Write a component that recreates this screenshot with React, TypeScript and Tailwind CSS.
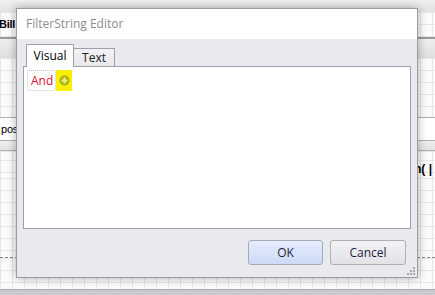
import React from "react";

const grid =
  "bg-[#fbfbfb] bg-[linear-gradient(to_right,#e6e6e6_1px,transparent_1px),linear-gradient(to_bottom,#e6e6e6_1px,transparent_1px)] bg-[size:12px_12px]";

function PlusIcon() {
  return (
    <svg width="11" height="11" viewBox="0 0 11 11">
      <circle cx="5.5" cy="5.5" r="5" fill="#a3a31e" />
      <circle cx="5.5" cy="5.5" r="4" fill="#b5b52a" />
      <path d="M5.5 2.5v6M2.5 5.5h6" stroke="#f0f07a" strokeWidth="1.8" />
    </svg>
  );
}

function Grip() {
  const dots = [
    [6, 0],
    [6, 3],
    [3, 3],
    [6, 6],
    [3, 6],
    [0, 6],
  ];
  return (
    <svg width="8" height="8" viewBox="0 0 8 8">
      {dots.map(([x, y], i) => (
        <rect key={i} x={x} y={y} width="2" height="2" fill="#a8a8b0" />
      ))}
    </svg>
  );
}

export default function App() {
  return (
    <div
      className="relative w-[435px] h-[295px] overflow-hidden"
      style={{ fontFamily: '"Open Sans", "Noto Sans", sans-serif' }}
    >
      {/* background designer */}
      <div className="flex flex-col w-full h-full">
        <div className="h-[12px] bg-gradient-to-b from-[#f0f0f0] to-[#e2e2e2]" />
        <div className={`h-[25px] ${grid} flex items-center`}>
          <span
            className="text-[11px] font-bold text-black leading-none -ml-[1px] tracking-[-0.3px]"
            style={{ fontFamily: '"Liberation Sans", sans-serif' }}
          >
            Bill
          </span>
          <span className="ml-[2px] w-[1px] h-[11px] bg-black" />
        </div>
        <div className="h-[2px] bg-[#9a9a9a]" />
        <div className="h-[19px] bg-gradient-to-b from-[#f0f0f0] to-[#dedede]" />
        <div className={`h-[59px] ${grid}`} />
        <div className="h-[1px] bg-[#b0b0b0]" />
        <div className="h-[22px] bg-white flex items-center">
          <span
            className="text-[11px] text-black leading-none pl-[1px] tracking-[-0.2px]"
            style={{ fontFamily: '"Liberation Sans", sans-serif' }}
          >
            pos
          </span>
        </div>
        <div className="h-[1px] bg-[#b0b0b0]" />
        <div className="h-[9px] bg-gradient-to-b from-[#f0f0f0] to-[#e2e2e2]" />
        <div className="h-[1px] bg-[#b0b0b0]" />
        <div className={`h-[9px] ${grid}`} />
        <div className={`h-[18px] ${grid} flex items-center justify-end`}>
          <span
            className="text-[12px] font-bold text-black leading-none pr-[3px]"
            style={{ fontFamily: '"Liberation Sans", sans-serif' }}
          >
            m( |
          </span>
        </div>
        <div className={`h-[79px] ${grid}`} />
        <div className="h-[0px] border-t border-dashed border-[#8a8a8a]" />
        <div className={`flex-1 ${grid}`} />
        <div className="h-[6px] bg-[#c9c9d0] border-t border-[#a9a9b0]" />
      </div>

      {/* dialog */}
      <div className="absolute left-[16px] top-[8px] w-[402px] h-[270px] border border-[#9b9ba2] bg-[#e9eaee] shadow-[0_0_9px_rgba(0,0,0,0.3)] flex flex-col">
        <div className="h-[30px] bg-white flex items-center pl-[9px]">
          <span className="text-[12px] text-[#8c8c98] leading-none">
            FilterString Editor
          </span>
        </div>
        <div className="flex-1 flex flex-col px-[6px] pt-[5px] relative">
          <div className="flex items-end h-[22px] pl-[3px]">
            <div className="h-[23px] w-[48px] bg-white border border-b-0 border-[#a0a0aa] flex items-center justify-center relative z-10 mb-[-1px]">
              <span className="text-[12px] text-black leading-none">Visual</span>
            </div>
            <div className="h-[18px] w-[41px] bg-gradient-to-b from-[#f3f3f5] to-[#e8e8ec] border border-l-0 border-b-0 border-[#a0a0aa] flex items-center justify-center">
              <span className="text-[12px] text-[#222] leading-none">Text</span>
            </div>
          </div>
          <div className="h-[163px] bg-white border border-[#a0a0aa] p-[3px]">
            <div className="flex items-stretch h-[21px]">
              <div className="border border-dotted border-[#c8c8c8] rounded-[2px] flex items-center pl-[3px] pr-[2px]">
                <span className="text-[12px] text-[#e0102a] leading-none">And</span>
              </div>
              <div className="w-[16px] bg-[#f7f000] flex items-center justify-center">
                <PlusIcon />
              </div>
            </div>
          </div>
          <div className="flex justify-end gap-[7px] mt-[11px] pr-[5px]">
            <button className="w-[75px] h-[25px] rounded-[3px] border border-[#a7abb8] bg-gradient-to-b from-[#e6eefd] to-[#cdd9f6] text-[12px] text-[#1e1e40]">
              OK
            </button>
            <button className="w-[76px] h-[25px] rounded-[3px] border border-[#aeb0b8] bg-gradient-to-b from-[#f3f3f5] to-[#e2e2e6] text-[12px] text-[#1e1e40]">
              Cancel
            </button>
          </div>
          <div className="absolute right-[2px] bottom-[2px]">
            <Grip />
          </div>
        </div>
      </div>
    </div>
  );
}
